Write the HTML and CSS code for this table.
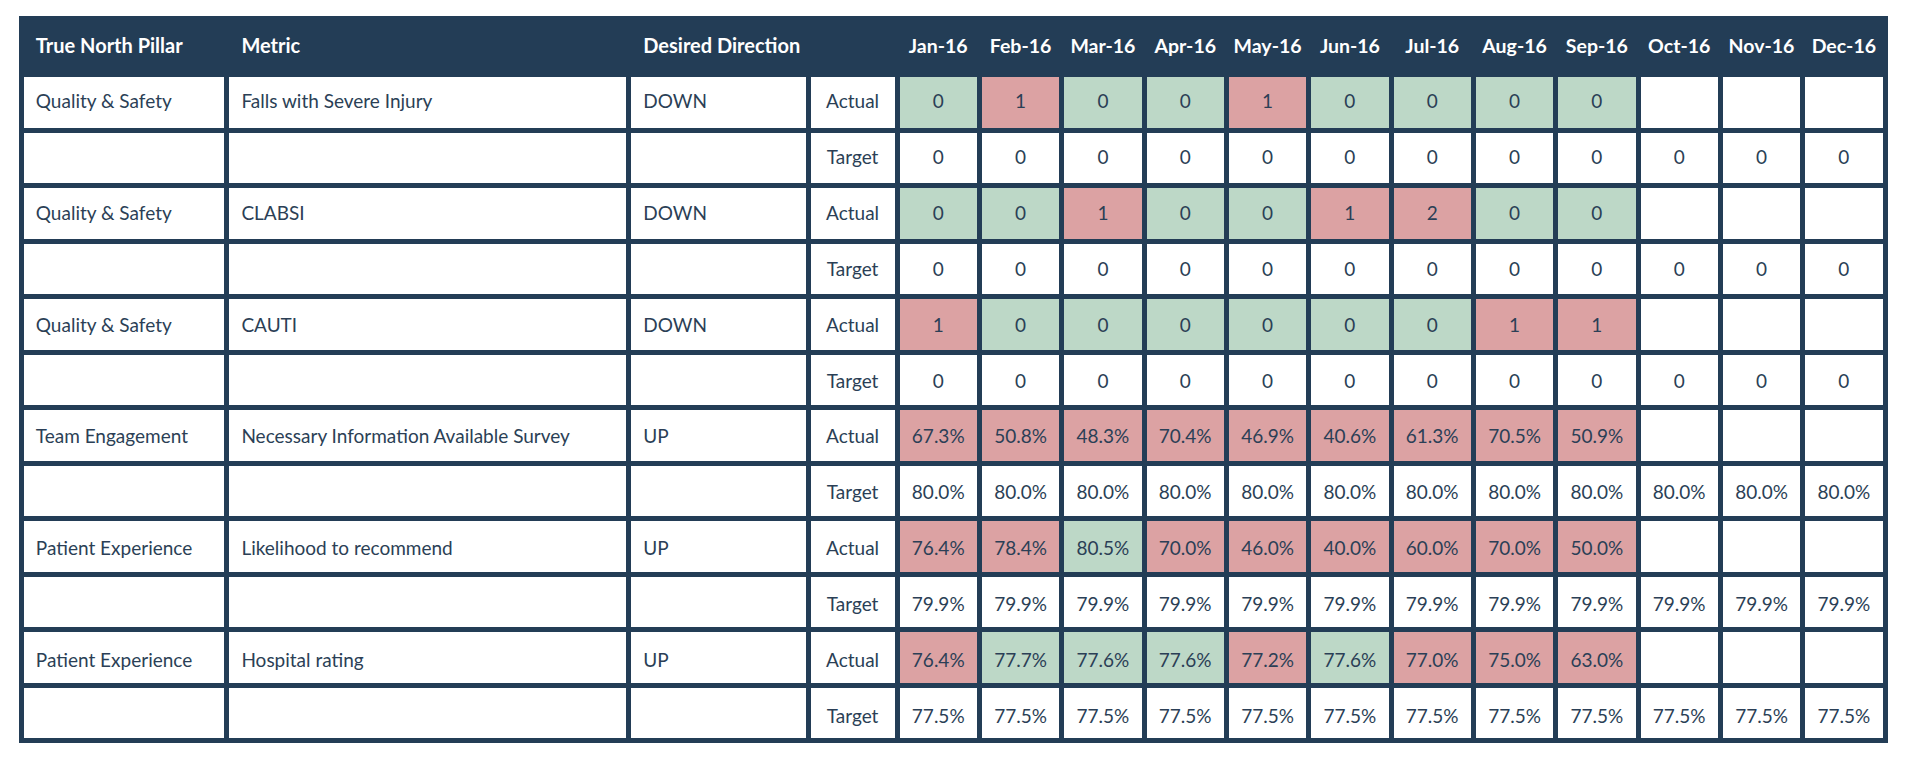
FILE: index.html
```html
<!DOCTYPE html>
<html lang="en">
<head>
<meta charset="utf-8">
<title>True North Scorecard</title>
<link rel="stylesheet" href="styles.css">
</head>
<body>
<table class="scorecard">
  <colgroup>
    <col class="c-pillar"><col class="c-metric"><col class="c-dir"><col class="c-type">
    <col class="c-m"><col class="c-m"><col class="c-m"><col class="c-m"><col class="c-m"><col class="c-m">
    <col class="c-m"><col class="c-m"><col class="c-m"><col class="c-m"><col class="c-m"><col class="c-m">
  </colgroup>
  <thead>
    <tr>
      <th class="txt">True North Pillar</th>
      <th class="txt">Metric</th>
      <th class="txt">Desired Direction</th>
      <th></th>
      <th>Jan-16</th><th>Feb-16</th><th>Mar-16</th><th>Apr-16</th><th>May-16</th><th>Jun-16</th>
      <th>Jul-16</th><th>Aug-16</th><th>Sep-16</th><th>Oct-16</th><th>Nov-16</th><th>Dec-16</th>
    </tr>
  </thead>
  <tbody>
    <tr class="act">
      <td class="txt">Quality &amp; Safety</td><td class="txt">Falls with Severe Injury</td><td class="txt">DOWN</td><td class="type">Actual</td>
      <td class="ok">0</td><td class="bad">1</td><td class="ok">0</td><td class="ok">0</td><td class="bad">1</td><td class="ok">0</td>
      <td class="ok">0</td><td class="ok">0</td><td class="ok">0</td><td></td><td></td><td></td>
    </tr>
    <tr class="tgt">
      <td></td><td></td><td></td><td class="type">Target</td>
      <td>0</td><td>0</td><td>0</td><td>0</td><td>0</td><td>0</td><td>0</td><td>0</td><td>0</td><td>0</td><td>0</td><td>0</td>
    </tr>
    <tr class="act">
      <td class="txt">Quality &amp; Safety</td><td class="txt">CLABSI</td><td class="txt">DOWN</td><td class="type">Actual</td>
      <td class="ok">0</td><td class="ok">0</td><td class="bad">1</td><td class="ok">0</td><td class="ok">0</td><td class="bad">1</td>
      <td class="bad">2</td><td class="ok">0</td><td class="ok">0</td><td></td><td></td><td></td>
    </tr>
    <tr class="tgt">
      <td></td><td></td><td></td><td class="type">Target</td>
      <td>0</td><td>0</td><td>0</td><td>0</td><td>0</td><td>0</td><td>0</td><td>0</td><td>0</td><td>0</td><td>0</td><td>0</td>
    </tr>
    <tr class="act">
      <td class="txt">Quality &amp; Safety</td><td class="txt">CAUTI</td><td class="txt">DOWN</td><td class="type">Actual</td>
      <td class="bad">1</td><td class="ok">0</td><td class="ok">0</td><td class="ok">0</td><td class="ok">0</td><td class="ok">0</td>
      <td class="ok">0</td><td class="bad">1</td><td class="bad">1</td><td></td><td></td><td></td>
    </tr>
    <tr class="tgt">
      <td></td><td></td><td></td><td class="type">Target</td>
      <td>0</td><td>0</td><td>0</td><td>0</td><td>0</td><td>0</td><td>0</td><td>0</td><td>0</td><td>0</td><td>0</td><td>0</td>
    </tr>
    <tr class="act">
      <td class="txt">Team Engagement</td><td class="txt">Necessary Information Available Survey</td><td class="txt">UP</td><td class="type">Actual</td>
      <td class="bad">67.3%</td><td class="bad">50.8%</td><td class="bad">48.3%</td><td class="bad">70.4%</td><td class="bad">46.9%</td><td class="bad">40.6%</td>
      <td class="bad">61.3%</td><td class="bad">70.5%</td><td class="bad">50.9%</td><td></td><td></td><td></td>
    </tr>
    <tr class="tgt">
      <td></td><td></td><td></td><td class="type">Target</td>
      <td>80.0%</td><td>80.0%</td><td>80.0%</td><td>80.0%</td><td>80.0%</td><td>80.0%</td><td>80.0%</td><td>80.0%</td><td>80.0%</td><td>80.0%</td><td>80.0%</td><td>80.0%</td>
    </tr>
    <tr class="act">
      <td class="txt">Patient Experience</td><td class="txt">Likelihood to recommend</td><td class="txt">UP</td><td class="type">Actual</td>
      <td class="bad">76.4%</td><td class="bad">78.4%</td><td class="ok">80.5%</td><td class="bad">70.0%</td><td class="bad">46.0%</td><td class="bad">40.0%</td>
      <td class="bad">60.0%</td><td class="bad">70.0%</td><td class="bad">50.0%</td><td></td><td></td><td></td>
    </tr>
    <tr class="tgt">
      <td></td><td></td><td></td><td class="type">Target</td>
      <td>79.9%</td><td>79.9%</td><td>79.9%</td><td>79.9%</td><td>79.9%</td><td>79.9%</td><td>79.9%</td><td>79.9%</td><td>79.9%</td><td>79.9%</td><td>79.9%</td><td>79.9%</td>
    </tr>
    <tr class="act">
      <td class="txt">Patient Experience</td><td class="txt">Hospital rating</td><td class="txt">UP</td><td class="type">Actual</td>
      <td class="bad">76.4%</td><td class="ok">77.7%</td><td class="ok">77.6%</td><td class="ok">77.6%</td><td class="bad">77.2%</td><td class="ok">77.6%</td>
      <td class="bad">77.0%</td><td class="bad">75.0%</td><td class="bad">63.0%</td><td></td><td></td><td></td>
    </tr>
    <tr class="tgt">
      <td></td><td></td><td></td><td class="type">Target</td>
      <td>77.5%</td><td>77.5%</td><td>77.5%</td><td>77.5%</td><td>77.5%</td><td>77.5%</td><td>77.5%</td><td>77.5%</td><td>77.5%</td><td>77.5%</td><td>77.5%</td><td>77.5%</td>
    </tr>
  </tbody>
</table>
</body>
</html>
```

FILE: styles.css
```css
html, body {
  margin: 0;
  padding: 0;
  background: #ffffff;
}

body {
  padding: 16px 0 0 18.8px;
  font-family: Lato, "Noto Sans", sans-serif;
  color: #2b3f56;
}

.scorecard {
  table-layout: fixed;
  border-collapse: separate;
  border-spacing: 5px;
  background: #233d56;
  font-size: 19px;
}

.c-pillar { width: 200.6px; }
.c-metric { width: 396.9px; }
.c-dir { width: 174.3px; }
.c-type { width: 84px; }
.c-m { width: 77.34px; }

.scorecard th {
  box-sizing: border-box;
  height: 51px;
  padding: 0 0 3px 0;
  color: #ffffff;
  font-size: 19.5px;
  font-weight: 700;
  text-align: center;
  vertical-align: middle;
  white-space: nowrap;
}

.scorecard th.txt {
  font-size: 20px;
}

.scorecard td {
  box-sizing: border-box;
  height: 50px;
  padding: 0;
  background: #ffffff;
  text-align: center;
  vertical-align: middle;
  white-space: nowrap;
}

.scorecard tr.act td {
  height: 51px;
}

/* text baseline drifts slightly downward row by row, as in the source export */
.scorecard tbody tr:nth-child(1) td { padding-bottom: 3.7px; }
.scorecard tbody tr:nth-child(2) td { padding-bottom: 3px; }
.scorecard tbody tr:nth-child(3) td { padding-bottom: 2.2px; }
.scorecard tbody tr:nth-child(4) td { padding-bottom: 1.5px; }
.scorecard tbody tr:nth-child(5) td { padding-bottom: 0.8px; }
.scorecard tbody tr:nth-child(7) td { padding-top: 0.7px; }
.scorecard tbody tr:nth-child(8) td { padding-top: 1.4px; }
.scorecard tbody tr:nth-child(9) td { padding-top: 2.2px; }
.scorecard tbody tr:nth-child(10) td { padding-top: 2.9px; }
.scorecard tbody tr:nth-child(11) td { padding-top: 3.6px; }
.scorecard tbody tr:nth-child(12) td { padding-top: 4.4px; }

.scorecard td.txt {
  text-align: left;
  padding-left: 12px;
}

.scorecard th.txt {
  text-align: left;
  padding-left: 12px;
}

.scorecard td.ok {
  background: #bdd8c7;
}

.scorecard td.bad {
  background: #dca2a3;
}
```
